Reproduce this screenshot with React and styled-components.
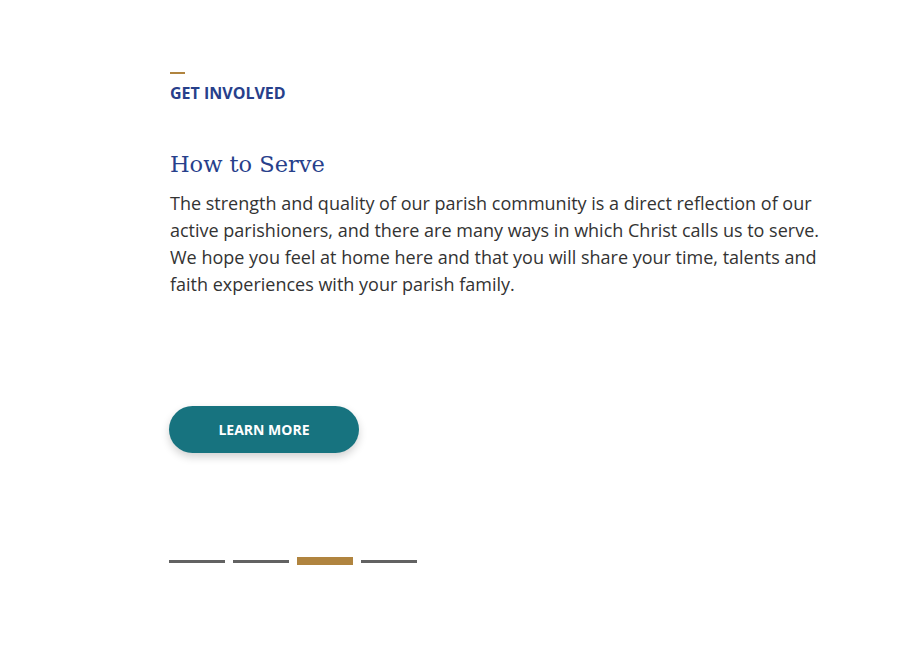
import React from 'react';
import styled, { createGlobalStyle } from 'styled-components';

const Global = createGlobalStyle`
  html, body { margin: 0; padding: 0; background: #fff; }
  body { font-family: "Open Sans", "Noto Sans", sans-serif; }
`;

const Section = styled.section`
  width: 920px;
  height: 656px;
  box-sizing: border-box;
  padding: 72px 0 0 169px;
  background: #fff;
`;

const Rule = styled.div`
  width: 15px;
  height: 2px;
  background: #b0843f;
  margin-left: 1px;
`;

const Eyebrow = styled.div`
  font-family: "Open Sans", sans-serif;
  font-weight: 700;
  font-size: 16px;
  line-height: 20px;
  color: #27408b;
  text-transform: uppercase;
  margin: 9px 0 0 1px;
`;

const Title = styled.h2`
  font-family: "DejaVu Serif", "Liberation Serif", serif;
  font-weight: 400;
  font-size: 22.5px;
  line-height: 32px;
  color: #27408b;
  margin: 45px 0 0 1px;
`;

const Body = styled.p`
  font-family: "Open Sans", sans-serif;
  font-size: 18px;
  line-height: 27px;
  color: #333;
  max-width: 660px;
  margin: 10px 0 0 1px;
`;

const Button = styled.button`
  display: flex;
  align-items: center;
  justify-content: center;
  width: 190px;
  height: 47px;
  border: none;
  border-radius: 24px;
  background: #17737f;
  color: #fff;
  font-family: "Open Sans", sans-serif;
  font-weight: 700;
  font-size: 14px;
  text-transform: uppercase;
  box-shadow: 0 4px 8px rgba(0, 0, 0, 0.18);
  margin-top: 108px;
  cursor: pointer;
`;

const Dots = styled.div`
  display: flex;
  align-items: center;
  gap: 8px;
  height: 8px;
  margin-top: 104px;
`;

const Dot = styled.span`
  display: block;
  width: 56px;
  height: ${p => (p.$active ? '8px' : '3px')};
  background: ${p => (p.$active ? '#b0843f' : '#626262')};
`;

export default function App() {
  return (
    <>
      <Global />
      <Section>
        <Rule />
        <Eyebrow>Get Involved</Eyebrow>
        <Title>How to Serve</Title>
        <Body>
          The strength and quality of our parish community is a direct reflection of our
          active parishioners, and there are many ways in which Christ calls us to serve.
          We hope you feel at home here and that you will share your time, talents and
          faith experiences with your parish family.
        </Body>
        <Button>Learn More</Button>
        <Dots>
          {[0, 1, 2, 3].map(i => (
            <Dot key={i} $active={i === 2} />
          ))}
        </Dots>
      </Section>
    </>
  );
}
